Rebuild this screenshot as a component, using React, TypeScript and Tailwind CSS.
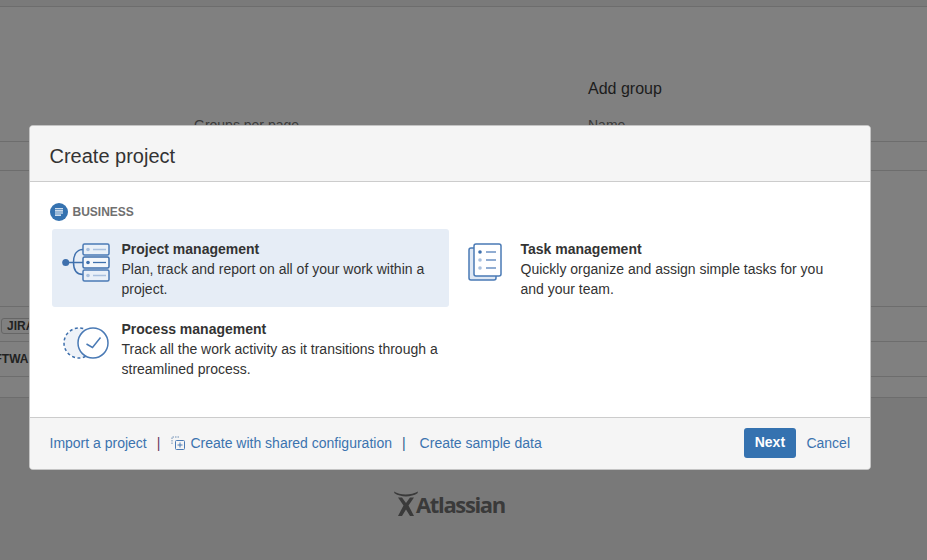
const sans = { fontFamily: '"Liberation Sans", Arial, sans-serif' };

function BusinessIcon() {
  return (
    <svg width="18" height="18" viewBox="0 0 18 18" className="shrink-0">
      <circle cx="9" cy="9" r="9" fill="#3572b0" />
      <path d="M5 5.800h8M5 7.900h8M5 10h8M5 12.100h6" stroke="#fff" strokeWidth="1.100" />
    </svg>
  );
}

function ProjectIcon() {
  return (
    <svg width="48" height="39" viewBox="0 0 48 39" fill="none" className="ml-[10px] mt-[14px] block">
      <circle cx="3.700" cy="19.500" r="3.500" fill="#3f70ad" />
      <path d="M4 19.500h17M21 6.500c-6 0-9.500 5-9.500 13s3.500 12 9.500 12" stroke="#3f70ad" strokeWidth="1.500" />
      <rect x="21" y="1" width="26" height="11" rx="1.500" fill="#e9f0f8" stroke="#4a7ab5" strokeWidth="1.500" />
      <rect x="21" y="14" width="26" height="11" rx="1.500" fill="#f4f7fb" stroke="#3f70ad" strokeWidth="1.500" />
      <rect x="21" y="27" width="26" height="11" rx="1.500" fill="#e9f0f8" stroke="#4a7ab5" strokeWidth="1.500" />
      <circle cx="26" cy="6.500" r="1.800" fill="#a9c0de" />
      <circle cx="26" cy="19.500" r="1.800" fill="#3f70ad" />
      <circle cx="26" cy="32.500" r="1.800" fill="#a9c0de" />
      <path d="M31 6.500h13M31 32.500h13" stroke="#a9c0de" strokeWidth="1.300" />
      <path d="M31 19.500h13" stroke="#3f70ad" strokeWidth="1.300" />
    </svg>
  );
}

function ProcessIcon() {
  return (
    <svg width="46" height="32" viewBox="0 0 46 32" fill="none" className="ml-[11px] mt-[18px] block">
      <circle cx="16" cy="16" r="15" fill="#eef2f8" stroke="#3f70ad" strokeWidth="1.500" strokeDasharray="3 2.500" />
      <circle cx="30" cy="16" r="15" fill="#fff" stroke="#4a7ab5" strokeWidth="1.500" />
      <path d="M23.500 17l6 3.500 8-10" stroke="#4a7ab5" strokeWidth="1.500" />
    </svg>
  );
}

function TaskIcon() {
  return (
    <svg width="34" height="38" viewBox="0 0 34 38" fill="none" className="ml-[17px] mt-[14px] block">
      <rect x="1" y="5" width="27" height="32" rx="2" fill="#dfe8f4" stroke="#4a7ab5" strokeWidth="1.500" />
      <rect x="6" y="1" width="27" height="32" rx="2" fill="#fff" stroke="#4a7ab5" strokeWidth="1.500" />
      <circle cx="12" cy="9" r="1.800" fill="#3f70ad" />
      <circle cx="12" cy="17" r="1.800" fill="#a9c0de" />
      <circle cx="12" cy="25" r="1.800" fill="#a9c0de" />
      <path d="M18 9h10M18 17h10M18 25h10" stroke="#6d93c4" strokeWidth="1.500" />
    </svg>
  );
}

function SharedConfigIcon() {
  return (
    <svg width="15" height="15" viewBox="0 0 15 15" fill="none" className="block shrink-0">
      <path d="M1 8V1h7" stroke="#6f8fb5" strokeWidth="1" strokeDasharray="1.500 1" />
      <rect x="4.500" y="4.500" width="9" height="9" rx="1" fill="#f5f5f5" stroke="#4a7ab5" />
      <path d="M9 6.500v5M6.500 9h5" stroke="#4a7ab5" />
    </svg>
  );
}

function AtlassianMark() {
  return (
    <svg width="24" height="25" viewBox="0 0 24 25" fill="#3a3a3a" className="block">
      <path d="M0 .5c6 4 17 4 24 0l-.5 1.800C17 6.500 7 6.500 .5 2.300z" />
      <path d="M4 6.500h4l4 5.500 4-5.500h4l-5.500 8L20 25h-4l-4-6.500L8 25H4l5.500-10.500z" />
    </svg>
  );
}

type Option = { title: string; lines: string[]; icon: React.ReactNode; selected?: boolean };

function ProjectOption({ title, lines, icon, selected }: Option) {
  return (
    <div className={`flex h-[78px] w-[397px] rounded-[3px] ${selected ? 'bg-[#e6edf6]' : ''}`}>
      <div className="w-[69.5px] shrink-0">{icon}</div>
      <div className="pt-[10px] text-[14px] leading-[20px] text-[#333333]">
        <div className="font-bold">{title}</div>
        {lines.map(line => (
          <div key={line}>{line}</div>
        ))}
      </div>
    </div>
  );
}

export default function App() {
  return (
    <div className="relative h-[560px] w-[927px] overflow-hidden bg-[#808080]" style={sans}>
      {/* page behind the dialog */}
      <div className="h-[7px] border-b border-[#6d6d6d] bg-[#7a7a7a]" />
      <div className="ml-[588px] mt-[72px] text-[16px] leading-[20px] text-[#1c1c1c]">Add group</div>
      <div className="mt-[17px] flex text-[14px] leading-[18px] text-[#3a3a3a]">
        <span className="ml-[194px] w-[394px]">Groups per page</span>
        <span>Name</span>
      </div>
      <div className="mt-[7px] h-[30px] border-y border-[#6d6d6d]" />
      <div className="mt-[135px] flex h-[35px] items-center border-t border-[#6d6d6d]">
        <span className="ml-px mt-[3px] flex h-[16px] w-[40px] items-center rounded-[3px] border border-[#666666] pl-[5px] text-[12px] font-bold text-[#222222]">
          JIRA
        </span>
      </div>
      <div className="flex h-[35px] items-center overflow-hidden border-t border-[#6d6d6d] text-[12px] font-bold text-[#222222]">
        <span className="-ml-[5.500px]">FTWA</span>
      </div>
      <div className="h-[22px] border-y border-[#6d6d6d]" />
      <div className="h-[163px] bg-[#797979] pt-[91px]">
        <div className="flex items-center pl-[394px]">
          <AtlassianMark />
          <span
            className="-ml-[2px] mt-[3px] text-[22px] leading-[25px] font-bold tracking-[-1.350px] text-[#3a3a3a]"
            style={{ fontFamily: '"Open Sans", sans-serif' }}
          >
            Atlassian
          </span>
        </div>
      </div>

      {/* dialog */}
      <div className="absolute top-[125px] left-[29px] flex h-[345px] w-[842px] flex-col overflow-hidden rounded-[4px] border border-[#c4c4c4] bg-white">
        <div className="flex h-[56px] shrink-0 items-center border-b border-[#cccccc] bg-[#f5f5f5] px-[19.5px] pt-[4px] text-[20px] text-[#333333]">
          Create project
        </div>
        <div className="flex-1 pl-[20px]">
          <div className="mt-[21px] flex h-[18px] items-center gap-[4.500px] text-[12px] font-bold text-[#707070]">
            <BusinessIcon />
            BUSINESS
          </div>
          <div className="mt-[8px] ml-[2px] flex flex-wrap gap-x-[2px] gap-y-[2px]">
            <ProjectOption
              selected
              title="Project management"
              lines={['Plan, track and report on all of your work within a', 'project.']}
              icon={<ProjectIcon />}
            />
            <ProjectOption
              title="Task management"
              lines={['Quickly organize and assign simple tasks for you', 'and your team.']}
              icon={<TaskIcon />}
            />
            <ProjectOption
              title="Process management"
              lines={['Track all the work activity as it transitions through a', 'streamlined process.']}
              icon={<ProcessIcon />}
            />
          </div>
        </div>
        <div className="flex h-[52px] shrink-0 items-center border-t border-[#cccccc] bg-[#f5f5f5] pl-[19.5px] pr-[20px] text-[14px] text-[#3b73af]">
          <span>Import a project</span>
          <span className="ml-[10px] text-[#6b3a5c]">|</span>
          <span className="ml-[11px] mr-[4px]">
            <SharedConfigIcon />
          </span>
          <span>Create with shared configuration</span>
          <span className="ml-[10px] text-[#2f5f8f]">|</span>
          <span className="ml-[14px]">Create sample data</span>
          <button className="mb-[2px] ml-auto h-[30px] w-[52px] rounded-[3px] bg-[#3572b0] pr-[1px] text-[14px] font-bold text-white">
            Next
          </button>
          <span className="ml-[10px]">Cancel</span>
        </div>
      </div>
    </div>
  );
}
